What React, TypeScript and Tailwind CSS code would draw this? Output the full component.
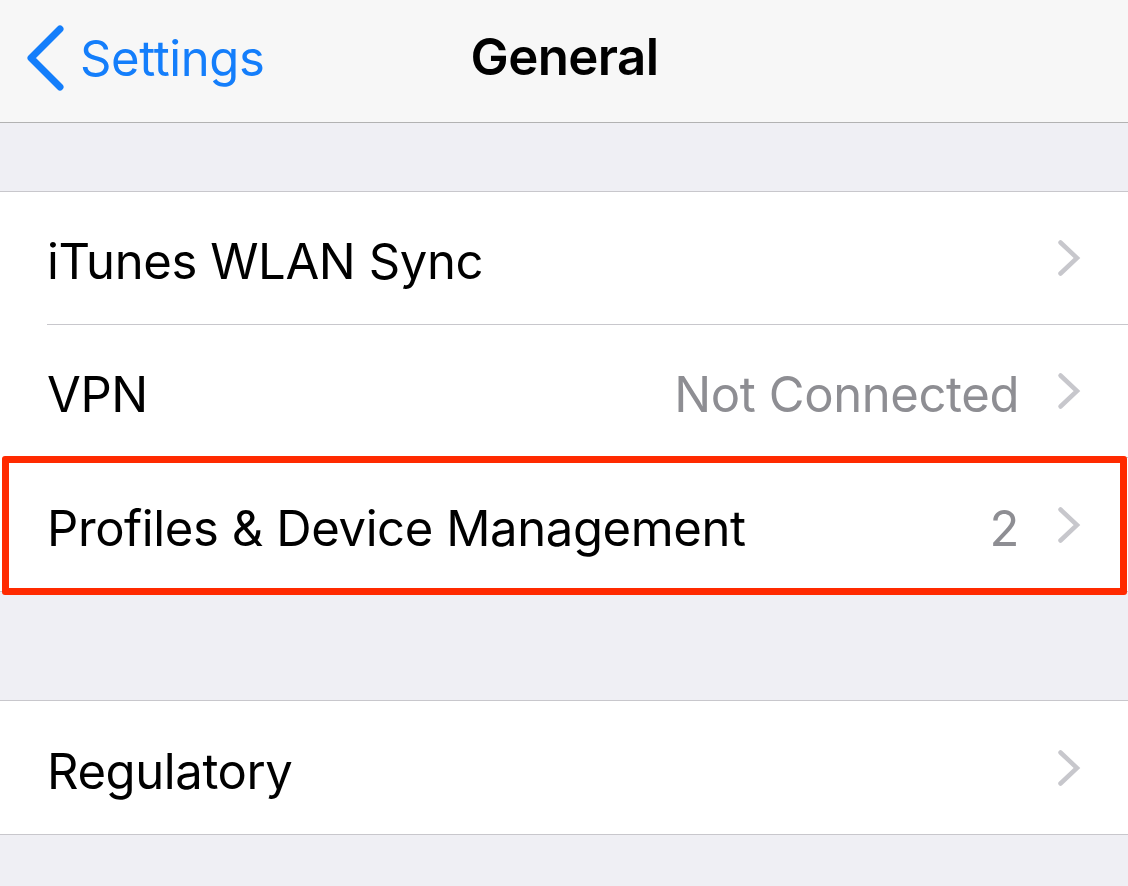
import { ReactNode } from 'react'

const font = { fontFamily: 'Inter, "Noto Sans", sans-serif' }

function Chevron() {
  return (
    <svg width="24" height="38" viewBox="0 0 24 38" fill="none" stroke="#c7c7cc" strokeWidth="4.5" strokeLinecap="round" strokeLinejoin="miter">
      <path d="M3.5 3.5 L20 19 L3.5 34.5" />
    </svg>
  )
}

function Row({ label, value, last, children }: { label: string; value?: string; last?: boolean; children?: ReactNode }) {
  return (
    <div className="relative bg-white pl-[47px]">
      <div className={`h-[133px] flex items-center pr-[47px] ${last ? '' : 'border-b border-[#c8c7cc]'}`}>
        <span className="flex-1 text-[49px] text-black tracking-[-0.4px] mt-[8px]">{label}</span>
        {value && <span className="text-[49px] text-[#8e8e93] mr-[38px] tracking-[-0.4px] mt-[8px]">{value}</span>}
        <Chevron />
      </div>
      {children}
    </div>
  )
}

export default function App() {
  return (
    <div className="w-[1128px] h-[886px] overflow-hidden bg-[#efeff4] flex flex-col" style={font}>

      {/* nav bar */}
      <div className="h-[123px] bg-[#f7f7f7] border-b border-[#b2b2b2] flex items-center relative shrink-0">
        <div className="flex items-center pl-[26px] text-[#147efb] gap-[14px] -mt-[6px]">
          <svg width="40" height="66" viewBox="0 0 40 66" fill="none" stroke="#147efb" strokeWidth="7" strokeLinecap="round" strokeLinejoin="round">
            <path d="M34 4 L5 33 L34 62" />
          </svg>
          <span className="text-[49px] tracking-[-0.4px] mt-[2px]">Settings</span>
        </div>
        <div className="absolute left-0 right-0 top-0 bottom-0 flex items-center justify-center pointer-events-none -mt-[8px] pl-[1px]">
          <span className="text-[51px] font-semibold text-black tracking-[-0.6px]">General</span>
        </div>
      </div>

      <div className="h-[68px] shrink-0" />

      {/* group 1 */}
      <div className="border-y border-[#c8c7cc] shrink-0">
        <Row label="iTunes WLAN Sync" />
        <Row label="VPN" value="Not Connected" />
        <Row label="Profiles & Device Management" value="2" last>
          <div className="absolute left-[2px] right-[1px] top-[-2px] bottom-[-4px] border-[7px] border-[#ff2a00] rounded-[3px]" />
        </Row>
      </div>

      <div className="h-[108px] shrink-0" />

      {/* group 2 */}
      <div className="border-y border-[#c8c7cc] shrink-0">
        <Row label="Regulatory" last />
      </div>
    </div>
  )
}
